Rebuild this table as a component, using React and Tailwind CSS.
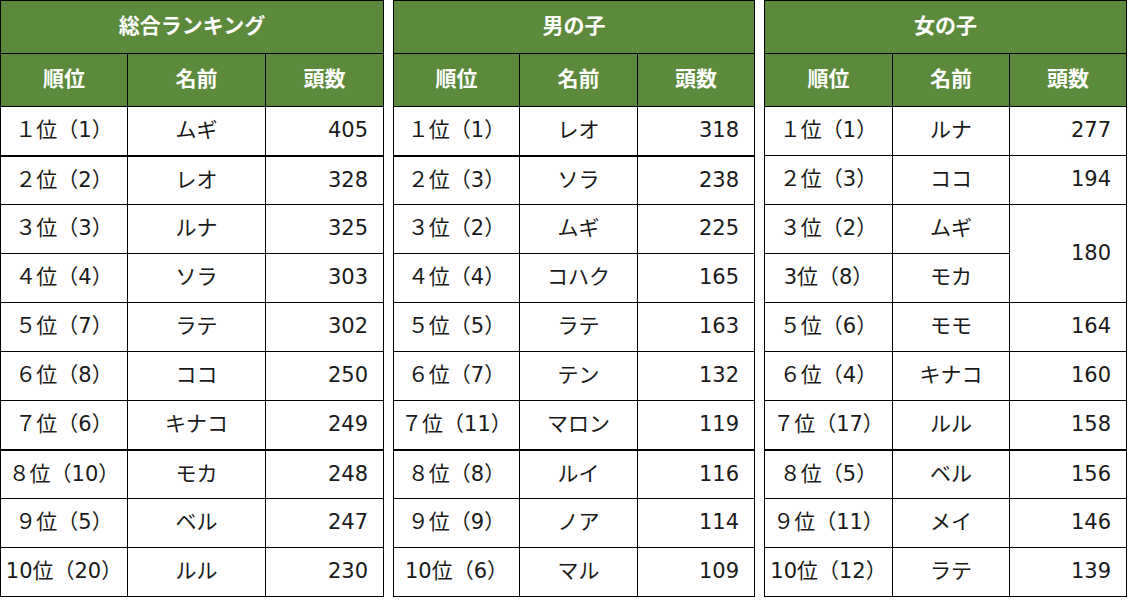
import React from 'react';

const GREEN = 'bg-[#5b8a3c]';

const tables = [
  {
    title: '総合ランキング',
    width: 'w-[383px]',
    cols: ['w-[127px]', 'w-[138px]', 'w-[118px]'],
    thick: [0, 6],
    rows: [
      ['１位（1）', 'ムギ', '405'],
      ['２位（2）', 'レオ', '328'],
      ['３位（3）', 'ルナ', '325'],
      ['４位（4）', 'ソラ', '303'],
      ['５位（7）', 'ラテ', '302'],
      ['６位（8）', 'ココ', '250'],
      ['７位（6）', 'キナコ', '249'],
      ['８位（10）', 'モカ', '248'],
      ['９位（5）', 'ベル', '247'],
      ['10位（20）', 'ルル', '230'],
    ],
  },
  {
    title: '男の子',
    width: 'w-[361px]',
    cols: ['w-[126px]', 'w-[118px]', 'w-[117px]'],
    thick: [0, 6],
    rows: [
      ['１位（1）', 'レオ', '318'],
      ['２位（3）', 'ソラ', '238'],
      ['３位（2）', 'ムギ', '225'],
      ['４位（4）', 'コハク', '165'],
      ['５位（5）', 'ラテ', '163'],
      ['６位（7）', 'テン', '132'],
      ['７位（11）', 'マロン', '119'],
      ['８位（8）', 'ルイ', '116'],
      ['９位（9）', 'ノア', '114'],
      ['10位（6）', 'マル', '109'],
    ],
  },
  {
    title: '女の子',
    width: 'w-[362px]',
    cols: ['w-[128px]', 'w-[117px]', 'w-[117px]'],
    thick: [6],
    rows: [
      ['１位（1）', 'ルナ', '277'],
      ['２位（3）', 'ココ', '194'],
      ['３位（2）', 'ムギ', '180', 2],
      ['3位（8）', 'モカ', null],
      ['５位（6）', 'モモ', '164'],
      ['６位（4）', 'キナコ', '160'],
      ['７位（17）', 'ルル', '158'],
      ['８位（5）', 'ベル', '156'],
      ['９位（11）', 'メイ', '146'],
      ['10位（12）', 'ラテ', '139'],
    ],
  },
];

function Ranking({ t }) {
  return (
    <table className={`${t.width} table-fixed border-collapse border border-black`}>
      <colgroup>
        {t.cols.map((c, i) => (
          <col key={i} className={c} />
        ))}
      </colgroup>
      <thead>
        <tr className={`${GREEN} h-[53px]`}>
          <th colSpan={3} className="border border-black text-white font-bold text-[21px] text-center">
            {t.title}
          </th>
        </tr>
        <tr className={`${GREEN} h-[53px]`}>
          {['順位', '名前', '頭数'].map((h) => (
            <th key={h} className="border border-black text-white font-bold text-[21px] text-center">
              {h}
            </th>
          ))}
        </tr>
      </thead>
      <tbody>
        {t.rows.map((r, i) => {
          const b = t.thick.includes(i) ? 'border-b-2' : '';
          return (
            <tr key={i} className="h-[49px] bg-white">
              <td className={`border border-black ${b} text-center whitespace-nowrap`}>{r[0]}</td>
              <td className={`border border-black ${b} text-center`}>{r[1]}</td>
              {r[2] !== null && (
                <td rowSpan={r[3] || 1} className={`border border-black ${b} text-right pr-[15px]`}>
                  {r[2]}
                </td>
              )}
            </tr>
          );
        })}
      </tbody>
    </table>
  );
}

export default function App() {
  return (
    <div
      className="w-[1128px] h-[600px] bg-white flex items-start gap-[9px] text-[21px] text-[#1a1a1a]"
      style={{ fontFamily: '"DejaVu Sans", "Noto Sans CJK JP", sans-serif' }}
    >
      {tables.map((t) => (
        <Ranking key={t.title} t={t} />
      ))}
    </div>
  );
}
